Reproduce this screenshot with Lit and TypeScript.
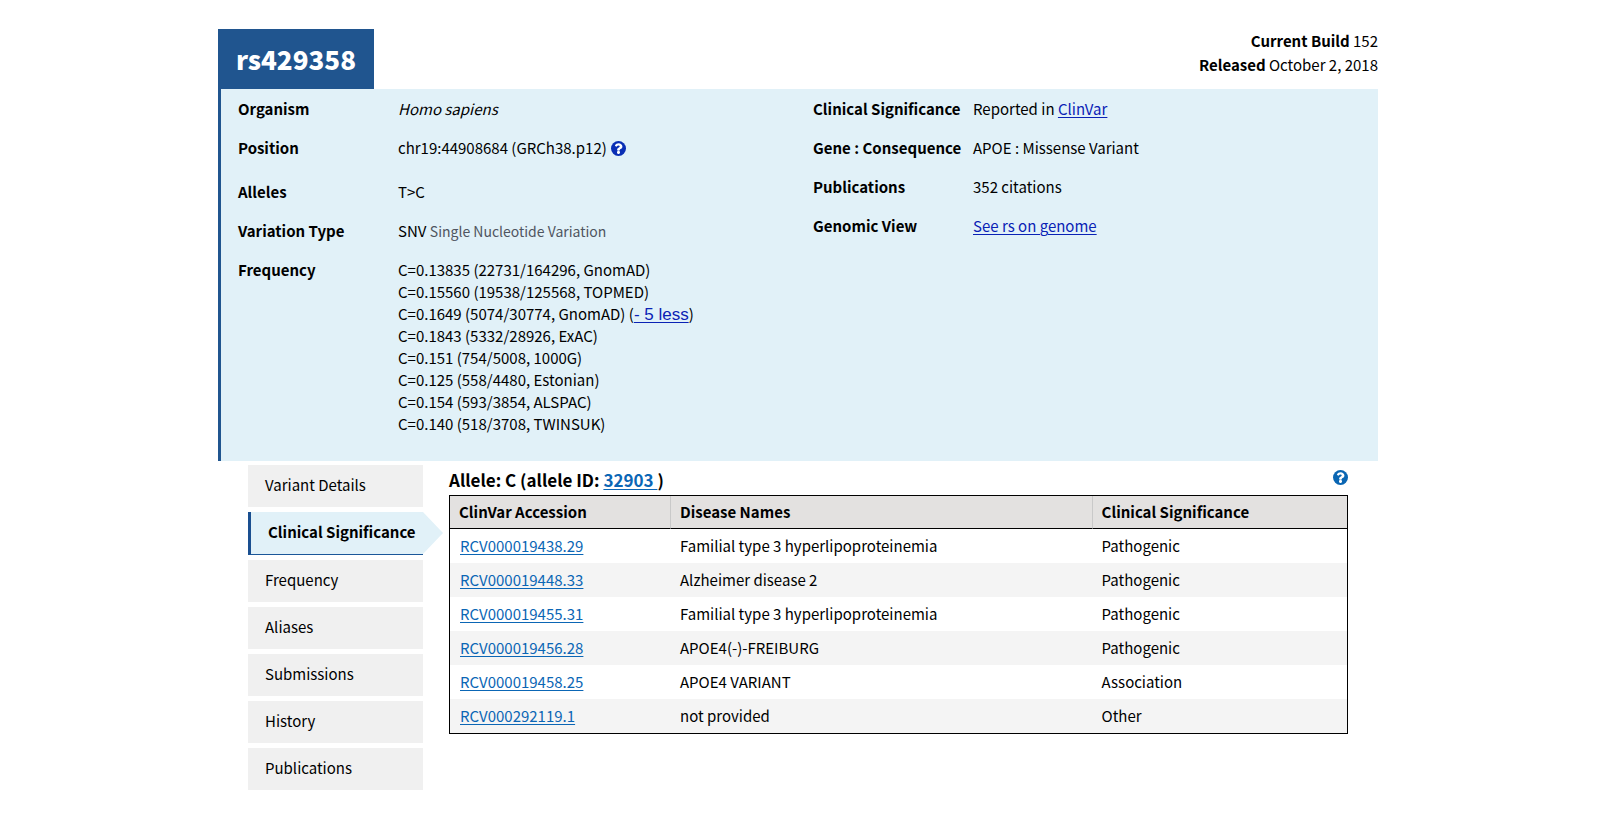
import { LitElement, html, css } from "lit";
import { customElement, property, state } from "lit/decorators.js";
import { classMap } from "lit/directives/class-map.js";

const FREQUENCIES = [
  "C=0.13835 (22731/164296, GnomAD)",
  "C=0.15560 (19538/125568, TOPMED)",
  "C=0.1649 (5074/30774, GnomAD)",
  "C=0.1843 (5332/28926, ExAC)",
  "C=0.151 (754/5008, 1000G)",
  "C=0.125 (558/4480, Estonian)",
  "C=0.154 (593/3854, ALSPAC)",
  "C=0.140 (518/3708, TWINSUK)",
];

const ALWAYS_SHOWN = 3;

const TABS = [
  "Variant Details",
  "Clinical Significance",
  "Frequency",
  "Aliases",
  "Submissions",
  "History",
  "Publications",
];

const ACCESSIONS = [
  ["RCV000019438.29", "Familial type 3 hyperlipoproteinemia", "Pathogenic"],
  ["RCV000019448.33", "Alzheimer disease 2", "Pathogenic"],
  ["RCV000019455.31", "Familial type 3 hyperlipoproteinemia", "Pathogenic"],
  ["RCV000019456.28", "APOE4(-)-FREIBURG", "Pathogenic"],
  ["RCV000019458.25", "APOE4 VARIANT", "Association"],
  ["RCV000292119.1", "not provided", "Other"],
];

@customElement("help-button")
export class HelpButton extends LitElement {
  @property() label = "Help";

  static styles = css`
    :host {
      display: inline-block;
      vertical-align: middle;
    }
    .help {
      display: block;
      padding: 0;
      border: 0;
      background: none;
      color: inherit;
      cursor: pointer;
    }
    .glyph {
      display: block;
      width: 15px;
      height: 15px;
    }
    .mark {
      fill: #fff;
    }
  `;

  render() {
    return html`<button class="help" type="button" aria-label=${this.label}>
      <svg class="glyph" viewBox="8 8 496 496" fill="currentColor" aria-hidden="true">
        <circle cx="256" cy="256" r="248" />
        <path
          class="mark"
          d="M262.655 80c-60 0-98 26-124 70-3.536 5.286-2.353 12.415 2.715 16.258l38 28c5.205 3.947 12.621 3.008 16.665-2.122 17.864-22.658 34-38 59-38 20.429 0 42 13.148 42 34 0 14.976-12.363 22.667-32.534 33.976C243 238 210 254.941 210 300v8c0 6.627 5.373 12 12 12h68c6.627 0 12-5.373 12-12v-5c0-26 84-32 84-110 0-66-64-113-123.345-113zM256 334c-28 0-51 23-51 51s23 51 51 51 51-23 51-51-23-51-51-51z"
        />
      </svg>
    </button>`;
  }
}

@customElement("app-root")
export class AppRoot extends LitElement {
  @state() private tab = "Clinical Significance";
  @state() private expanded = true;

  static styles = css`
    :host {
      display: block;
      box-sizing: border-box;
      min-height: 100vh;
      padding: 29px 24px 30px 20px;
      background: #fff;
      color: #000;
      font-family: "Noto Sans CJK SC", "Open Sans", sans-serif;
      font-size: 15px;
      line-height: 22px;
    }
    .page {
      max-width: 1160px;
      margin: 0 auto;
    }
    .top {
      display: flex;
      justify-content: space-between;
      align-items: flex-start;
    }
    .title {
      margin: 0;
      padding: 0 18px;
      background: #20558f;
      color: #fff;
      font-size: 26px;
      line-height: 60px;
      font-weight: 900;
    }
    .build {
      text-align: right;
      line-height: 24px;
    }
    .summary {
      display: grid;
      grid-template-columns: 575fr 565fr;
      padding: 9px 0 26px 17px;
      border-left: 3px solid #20558f;
      background: #e1f1f8;
    }
    .facts {
      display: grid;
      grid-template-columns: 160px 1fr;
      row-gap: 17px;
      align-content: start;
      margin: 0;
    }
    .term {
      font-weight: 700;
      white-space: nowrap;
    }
    .value {
      margin: 0;
    }
    .with-help {
      display: flex;
      gap: 4px;
      height: 27px;
      align-items: flex-start;
    }
    .with-help help-button {
      margin-top: 4px;
      color: #0a2fb5;
    }
    .note {
      color: #4f5560;
      font-size: 14px;
      line-height: 1;
    }
    .species {
      font-style: italic;
    }
    .frequencies {
      margin: 0;
      padding: 0;
      list-style: none;
    }
    .link {
      color: #0a22b5;
      text-decoration: underline;
      text-decoration-thickness: 1px;
      text-underline-offset: 2px;
    }
    .toggle {
      padding: 0;
      border: 0;
      background: none;
      font: 17px/1 "Liberation Sans", Arial, sans-serif;
      cursor: pointer;
    }
    .body {
      display: grid;
      grid-template-columns: 175px minmax(0, 1fr);
      column-gap: 26px;
      align-items: start;
      padding: 4px 30px 0;
    }
    .tabs {
      display: grid;
      grid-template-columns: minmax(0, 1fr);
      row-gap: 5px;
    }
    .tab {
      padding: 9px 17px 11px;
      border: 0;
      background: #f0f0f0;
      color: #000;
      font: inherit;
      text-align: left;
      white-space: nowrap;
      cursor: pointer;
    }
    .tab.active {
      position: relative;
      border-left: 3px solid #1a4f90;
      border-bottom: 1px solid #1a5799;
      background: #e1f1f8;
      font-weight: 700;
      padding-right: 0;
    }
    .tab.active::after {
      content: "";
      position: absolute;
      top: 0;
      left: 100%;
      width: 20px;
      height: 42px;
      background: #e1f1f8;
      clip-path: polygon(0 0, 100% 50%, 0 100%);
    }
    .panel-head {
      display: flex;
      justify-content: space-between;
      align-items: flex-start;
      padding-bottom: 4px;
    }
    .panel-head help-button {
      margin-top: 5px;
      color: #0a66b3;
    }
    .allele {
      margin: 0;
      padding-top: 4px;
      font-size: 17px;
      line-height: 22px;
      font-weight: 700;
    }
    .ref {
      color: #0b66b5;
    }
    .table {
      width: 100%;
      table-layout: fixed;
      border: 1px solid #000;
      border-collapse: separate;
      border-spacing: 0;
    }
    .col-accession {
      width: 220px;
    }
    .col-disease {
      width: 47%;
    }
    .head {
      height: 33px;
      box-sizing: border-box;
      padding: 0 9px;
      border-bottom: 1px solid #000;
      background: #e3e1e0;
      font-weight: 700;
      text-align: left;
    }
    .head + .head {
      border-left: 1px solid #c9c9c9;
    }
    .cell {
      padding: 6px 10px;
    }
    .row:nth-child(even) .cell {
      background: #f4f4f4;
    }
  `;

  private facts() {
    const shown = this.expanded ? FREQUENCIES : FREQUENCIES.slice(0, ALWAYS_SHOWN);
    const extra = FREQUENCIES.length - ALWAYS_SHOWN;
    return html`
      <dl class="facts">
        <dt class="term">Organism</dt>
        <dd class="value species">Homo sapiens</dd>
        <dt class="term">Position</dt>
        <dd class="value with-help">
          <span>chr19:44908684 (GRCh38.p12)</span>
          <help-button label="Help on position"></help-button>
        </dd>
        <dt class="term">Alleles</dt>
        <dd class="value">T&gt;C</dd>
        <dt class="term">Variation Type</dt>
        <dd class="value">SNV <span class="note">Single Nucleotide Variation</span></dd>
        <dt class="term">Frequency</dt>
        <dd class="value">
          <ul class="frequencies">
            ${shown.map(
              (line, i) => html`<li>${line}${i === ALWAYS_SHOWN - 1
                ? html` (<button
                      class="link toggle"
                      type="button"
                      @click=${() => (this.expanded = !this.expanded)}
                    >${this.expanded ? `- ${extra} less` : `+ ${extra} more`}</button>)`
                : ""}</li>`
            )}
          </ul>
        </dd>
      </dl>
      <dl class="facts">
        <dt class="term">Clinical Significance</dt>
        <dd class="value">Reported in <a class="link" href="#clinvar">ClinVar</a></dd>
        <dt class="term">Gene : Consequence</dt>
        <dd class="value">APOE : Missense Variant</dd>
        <dt class="term">Publications</dt>
        <dd class="value">352 citations</dd>
        <dt class="term">Genomic View</dt>
        <dd class="value"><a class="link" href="#genome">See rs on genome</a></dd>
      </dl>
    `;
  }

  render() {
    return html`
      <main class="page">
        <header class="top">
          <h1 class="title">rs429358</h1>
          <div class="build">
            <div><b>Current Build</b> 152</div>
            <div><b>Released</b> October 2, 2018</div>
          </div>
        </header>
        <section class="summary">${this.facts()}</section>
        <div class="body">
          <nav class="tabs" aria-label="Sections">
            ${TABS.map(
              (name) => html`<button
                type="button"
                class=${classMap({ tab: true, active: name === this.tab })}
                @click=${() => (this.tab = name)}
              >${name}</button>`
            )}
          </nav>
          <section>
            <div class="panel-head">
              <h2 class="allele">Allele: C (allele ID: <a class="link ref" href="#32903">32903 </a>)</h2>
              <help-button label="Help on clinical significance"></help-button>
            </div>
            <table class="table">
              <colgroup>
                <col class="col-accession" />
                <col class="col-disease" />
                <col />
              </colgroup>
              <thead>
                <tr>
                  <th class="head" scope="col">ClinVar Accession</th>
                  <th class="head" scope="col">Disease Names</th>
                  <th class="head" scope="col">Clinical Significance</th>
                </tr>
              </thead>
              <tbody>
                ${ACCESSIONS.map(
                  ([id, disease, significance]) => html`<tr class="row">
                    <td class="cell"><a class="link ref" href="#${id}">${id}</a></td>
                    <td class="cell">${disease}</td>
                    <td class="cell">${significance}</td>
                  </tr>`
                )}
              </tbody>
            </table>
          </section>
        </div>
      </main>
    `;
  }
}
